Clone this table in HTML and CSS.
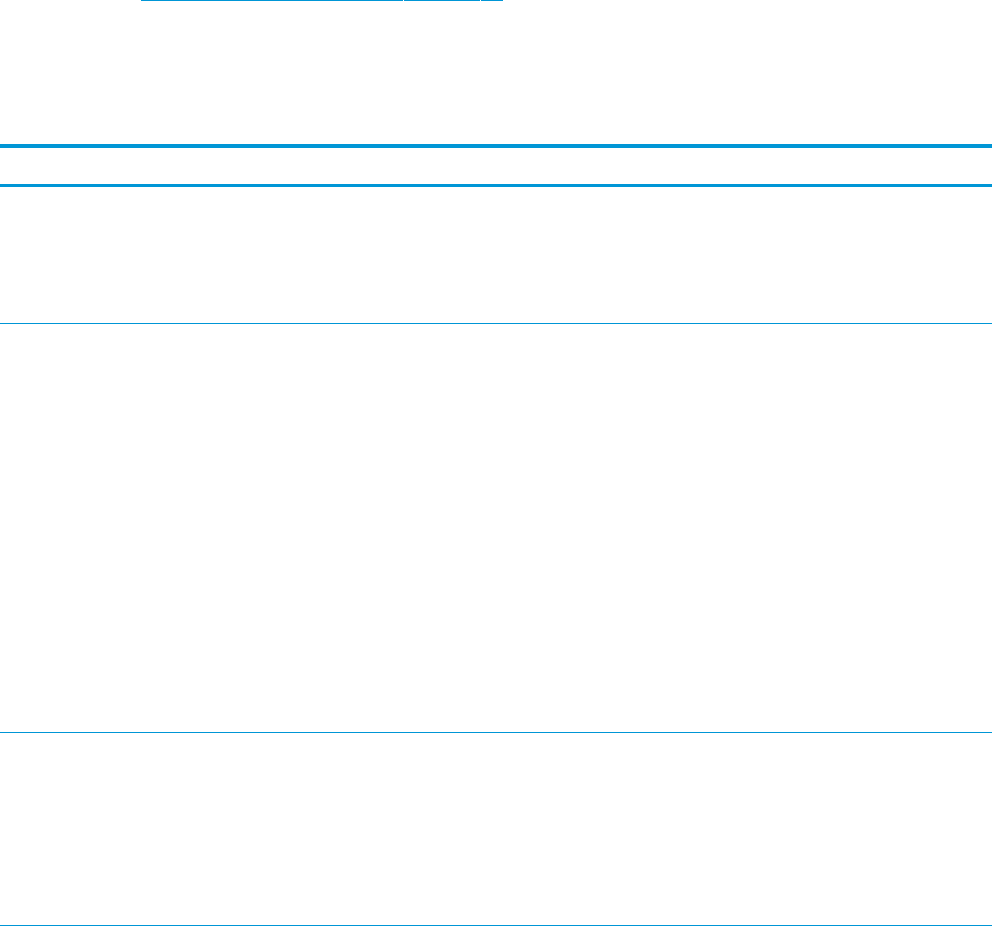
FILE: index.html
```
<!DOCTYPE html>
<html lang="en">

<head>
    <meta charset="UTF-8" />
    <meta name="viewport" content="width=device-width, initial-scale=1" />
    <title>Support documents</title>
    <link rel="stylesheet" href="styles.css">
</head>

<body>
    <div class="page">
        <nav class="doc-links">
            <a href="#" class="doc-link doc-link-main">Customer support documentation</a>
            <a href="#" class="doc-link doc-link-mid">manuals</a>
            <a href="#" class="doc-link doc-link-end">pdf</a>
        </nav>

        <div class="spec-table">
            <div class="spec-head"></div>
            <div class="spec-row row-short"></div>
            <div class="spec-row row-tall"></div>
            <div class="spec-row row-mid"></div>
        </div>
    </div>
</body>

</html>
```
FILE: styles.css
```
:root {
    --accent: #0096d6;
    --text: #000;
}

body {
    margin: 0;
    background-color: #fff;
    color: var(--text);
    font-family: 'Liberation Sans', Arial, sans-serif;
}

.page {
    overflow: hidden;
    height: 926px;
}

.doc-links {
    display: flex;
    gap: 1px;
    margin-top: -24px;
    padding-left: 141px;
}

.doc-link {
    display: block;
    height: 24px;
    line-height: 24px;
    font-size: 16px;
    color: var(--accent);
    text-decoration: none;
    border-bottom: 1px solid var(--accent);
    overflow: hidden;
    white-space: nowrap;
}

.doc-link-main {
    width: 262px;
}

.doc-link-mid {
    width: 76px;
}

.doc-link-end {
    width: 22px;
}

.spec-table {
    margin-top: 143px;
    border-top: 4px solid var(--accent);
}

.spec-head {
    height: 36px;
    border-bottom: 3px solid var(--accent);
}

.spec-row {
    border-bottom: 1px solid var(--accent);
}

.row-short {
    height: 136px;
}

.row-tall {
    height: 408px;
}

.row-mid {
    height: 192px;
}
```
